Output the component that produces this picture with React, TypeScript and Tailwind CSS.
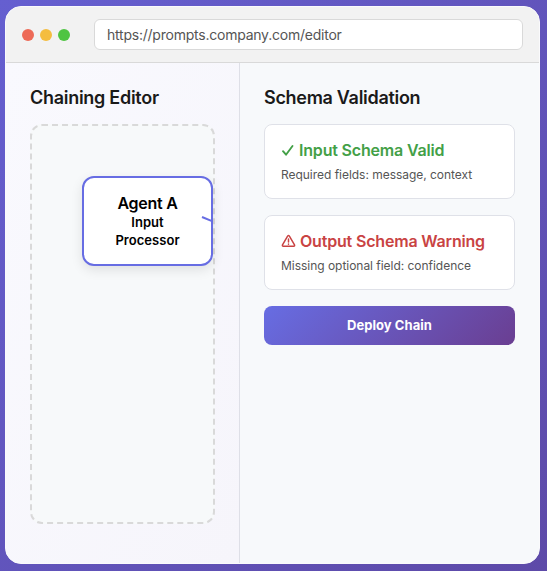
import React from "react";

function ValidIcon() {
  return (
    <svg className="h-[14px] w-[14px] shrink-0" viewBox="0 0 14 14" fill="none" stroke="currentColor" strokeWidth="1.9" strokeLinecap="round" strokeLinejoin="round">
      <path d="M2 8.2 5 11.7 11.5 3" />
    </svg>
  );
}

function WarningIcon() {
  return (
    <svg className="h-[14px] w-[15px] shrink-0" viewBox="0 0 15 14" fill="none" stroke="currentColor" strokeWidth="1.5" strokeLinecap="round" strokeLinejoin="round">
      <path d="M6.6 2.1 1.5 10.8Q1 12.2 2.4 12.3H12.6Q14 12.2 13.5 10.8L8.4 2.1Q7.5 .9 6.6 2.1Z" />
      <path d="M7.5 4.9V8M7.5 10.1V10.2" />
    </svg>
  );
}

function SchemaCard({ icon, title, detail, color }: { icon: React.ReactNode; title: string; detail: string; color: string }) {
  return (
    <section className="h-[75px] rounded-lg border border-[#dfe1e8] bg-white px-4 pt-[13px]">
      <h3 className={`flex items-center gap-1 text-base leading-6 font-semibold tracking-[-0.18px] whitespace-nowrap ${color}`}>
        {icon}
        {title}
      </h3>
      <p className="mt-1 text-xs leading-[18px] tracking-[-0.03px] text-[#555]">{detail}</p>
    </section>
  );
}

export default function App() {
  return (
    <div className="h-[571px] w-[547px] bg-linear-to-br from-[#655fd0] to-[#5d4aa8] pt-[6px] pl-[5px] font-['Inter',sans-serif]">
      <div className="flex h-[558px] w-[535px] flex-col overflow-hidden rounded-2xl border border-[#fafafc] bg-[#f7f9fb]">
        <header className="flex h-14 shrink-0 items-center border-b border-[#d9d9d9] bg-[#f2f2f2] pr-4 pl-4">
          <div className="flex gap-1.5">
            <span className="size-3 rounded-full bg-[#ed6a57]" />
            <span className="size-3 rounded-full bg-[#f4bd40]" />
            <span className="size-3 rounded-full bg-[#4fc442]" />
          </div>
          <div className="ml-6 flex h-[31px] flex-1 items-center rounded-md border border-[#d9d9d9] bg-white px-3 text-sm tracking-[-0.23px] text-[#555]">
            https://prompts.company.com/editor
          </div>
        </header>
        <main className="flex flex-1">
          <section className="w-[234px] shrink-0 border-r border-[#dedfe7] bg-linear-to-br from-[#f9f9fe] to-[#f6f5fb] px-6 pt-[21px]">
            <h2 className="text-lg leading-7 font-semibold tracking-[-0.28px] whitespace-nowrap text-[#1a1a1a]">Chaining Editor</h2>
            <div className="relative mt-3 h-[400px] w-[185px] rounded-xl border-2 border-dashed border-[#d9d9d9] bg-[#f7f9fa]">
              <div className="absolute top-[50px] left-[50px] flex h-[90px] w-[131px] flex-col items-center rounded-xl border-2 border-[#676de3] bg-white pt-[15px] text-center font-semibold text-black shadow-[0_4px_12px_rgba(0,0,0,0.1)]">
                <strong className="text-base leading-5 font-semibold tracking-[-0.25px]">Agent A</strong>
                <span className="text-[13px] leading-[18px] tracking-[0.05px]">Input<br />Processor</span>
              </div>
              <svg className="absolute top-[88px] left-[168px] h-3 w-[13px]" viewBox="0 0 13 12" fill="none" stroke="#676de3" strokeWidth="2">
                <path d="M2 3 12 7.2" />
              </svg>
            </div>
          </section>
          <section className="flex-1 px-6 pt-[21px]">
            <h2 className="text-lg leading-7 font-semibold tracking-[-0.3px] text-[#1a1a1a]">Schema Validation</h2>
            <div className="mt-3 flex flex-col gap-4">
              <SchemaCard icon={<ValidIcon />} title="Input Schema Valid" detail="Required fields: message, context" color="text-[#43a047]" />
              <SchemaCard icon={<WarningIcon />} title="Output Schema Warning" detail="Missing optional field: confidence" color="text-[#c94343]" />
              <button className="h-[39px] rounded-lg bg-[linear-gradient(135deg,#676de3,#6a3e91)] text-[13px] font-bold tracking-[0.05px] text-white">Deploy Chain</button>
            </div>
          </section>
        </main>
      </div>
    </div>
  );
}
